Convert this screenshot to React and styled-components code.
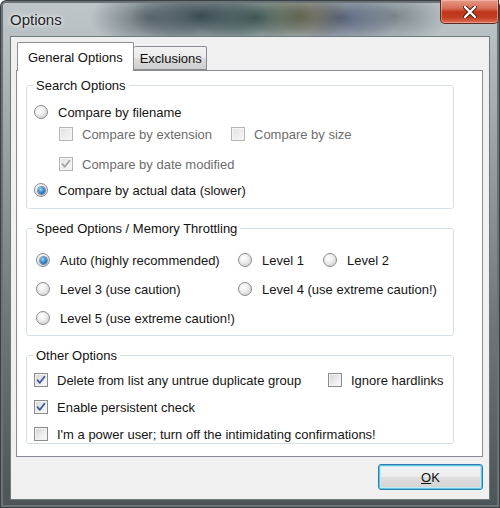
import styled, { createGlobalStyle } from "styled-components";

const GlobalStyle = createGlobalStyle`
  html, body { margin: 0; padding: 0; }
  body { font-family: "Liberation Sans", Arial, sans-serif; }
`;

const CheckMark = ({ disabled }) => (
  <svg width="10" height="10" viewBox="0 0 10 10">
    <path
      d="M1.5 5.2 L3.8 7.8 L8.5 1.8"
      fill="none"
      stroke={disabled ? "#a3a3a3" : "#3d5a9e"}
      strokeWidth="1.8"
      strokeLinecap="round"
      strokeLinejoin="round"
    />
  </svg>
);

const Radio = ({ checked }) => <RadioBox $checked={checked} />;

const Check = ({ checked, disabled }) => (
  <CheckBox $disabled={disabled}>{checked && <CheckMark disabled={disabled} />}</CheckBox>
);

const Option = ({ kind, checked, disabled, label, w }) => (
  <Cell $w={w}>
    {kind === "radio" ? <Radio checked={checked} /> : <Check checked={checked} disabled={disabled} />}
    <Label $disabled={disabled} $gap={kind === "radio" ? 10 : 9}>{label}</Label>
  </Cell>
);

export default function App() {
  return (
    <>
      <GlobalStyle />
      <Frame>
        <TitleBar>
          <Title>Options</Title>
          <CloseButton>
            <svg width="14" height="12" viewBox="0 0 14 12">
              <path d="M2 1 L12 11 M12 1 L2 11" stroke="#4a1b12" strokeWidth="4.2" strokeLinecap="round" />
              <path d="M2 1 L12 11 M12 1 L2 11" stroke="#ffffff" strokeWidth="2.4" strokeLinecap="round" />
            </svg>
          </CloseButton>
        </TitleBar>
        <Client>
          <TabStrip>
            <Tab $active>General Options</Tab>
            <Tab>Exclusions</Tab>
          </TabStrip>
          <Panel>
            <Group>
              <Legend>Search Options</Legend>
              <Row $indent={7}>
                <Option kind="radio" label="Compare by filename" />
              </Row>
              <Row $indent={32} $top={4}>
                <Option kind="check" disabled label="Compare by extension" w={172} />
                <Option kind="check" disabled label="Compare by size" />
              </Row>
              <Row $indent={32} $top={12}>
                <Option kind="check" disabled checked label="Compare by date modified" />
              </Row>
              <Row $indent={7} $top={8}>
                <Option kind="radio" checked label="Compare by actual data (slower)" />
              </Row>
            </Group>

            <Group $padTop={15} $padBottom={8}>
              <Legend>Speed Options / Memory Throttling</Legend>
              <Row $indent={9}>
                <Option kind="radio" checked label="Auto (highly recommended)" w={202} />
                <Option kind="radio" label="Level 1" w={85} />
                <Option kind="radio" label="Level 2" />
              </Row>
              <Row $indent={9} $top={11}>
                <Option kind="radio" label="Level 3 (use caution)" w={202} />
                <Option kind="radio" label="Level 4 (use extreme caution!)" />
              </Row>
              <Row $indent={9} $top={11}>
                <Option kind="radio" label="Level 5 (use extreme caution!)" />
              </Row>
            </Group>

            <Group $padTop={8} $padBottom={0}>
              <Legend>Other Options</Legend>
              <Row $indent={7}>
                <Option kind="check" checked label="Delete from list any untrue duplicate group" w={294} />
                <Option kind="check" label="Ignore hardlinks" />
              </Row>
              <Row $indent={7} $top={9}>
                <Option kind="check" checked label="Enable persistent check" />
              </Row>
              <Row $indent={7} $top={9}>
                <Option kind="check" label="I'm a power user; turn off the intimidating confirmations!" />
              </Row>
            </Group>
          </Panel>
          <ButtonBar>
            <OkButton>
              <u>O</u>K
            </OkButton>
          </ButtonBar>
        </Client>
      </Frame>
    </>
  );
}

/* ---- window frame ---- */

const Frame = styled.div`
  width: 500px;
  height: 508px;
  box-sizing: border-box;
  padding: 0 10px 8px 10px;
  display: flex;
  flex-direction: column;
  background:
    radial-gradient(ellipse 60px 30px at 150px 18px, rgba(60, 75, 82, 0.7), transparent),
    radial-gradient(ellipse 70px 32px at 200px 16px, rgba(34, 52, 60, 0.85), transparent),
    radial-gradient(ellipse 60px 30px at 255px 18px, rgba(40, 70, 62, 0.8), transparent),
    radial-gradient(ellipse 50px 28px at 300px 16px, rgba(95, 85, 45, 0.7), transparent),
    radial-gradient(ellipse 60px 30px at 340px 18px, rgba(52, 66, 100, 0.75), transparent),
    radial-gradient(ellipse 55px 28px at 395px 16px, rgba(90, 105, 112, 0.65), transparent),
    linear-gradient(180deg, #bfc6c9 0px, #b8c0c3 36px, #9ba3a6 140px, #6f777a 320px, #4d5457 508px);
  box-shadow: inset 0 0 0 1px #3a4144, inset 0 0 0 3px #6b7376;
  border-radius: 6px 6px 0 0;
`;

const TitleBar = styled.div`
  height: 37px;
  display: flex;
  align-items: flex-start;
  justify-content: space-between;
`;

const Title = styled.div`
  margin-top: 11px;
  font-size: 15px;
  color: #1d2326;
  text-shadow: 0 0 6px rgba(255, 255, 255, 0.9), 0 0 3px rgba(255, 255, 255, 0.8);
`;

const CloseButton = styled.div`
  width: 59px;
  height: 24px;
  margin-right: -9px;
  box-sizing: border-box;
  border: 1px solid #5b2a22;
  border-top: none;
  border-radius: 0 0 5px 5px;
  display: flex;
  align-items: center;
  justify-content: center;
  background: linear-gradient(180deg, #e59a89 0%, #d9705a 35%, #bf3519 52%, #c33c22 75%, #dc6e50 100%);
  box-shadow: inset 0 0 0 1px rgba(255, 200, 190, 0.5);
`;

const Client = styled.div`
  flex: 1;
  display: flex;
  flex-direction: column;
  box-sizing: border-box;
  padding: 5px 6px 9px 5px;
  background: #f0f0f0;
  border: 1px solid #6f7a7f;
  font-size: 13px;
  color: #1a1a1a;
`;

/* ---- tabs ---- */

const TabStrip = styled.div`
  display: flex;
  align-items: flex-end;
  height: 28px;
  padding-left: 1px;
`;

const Tab = styled.div`
  box-sizing: border-box;
  height: ${(p) => (p.$active ? "29px" : "24px")};
  margin-bottom: ${(p) => (p.$active ? "-1px" : "0")};
  padding: 0 ${(p) => (p.$active ? "10px" : "4px")} 0 ${(p) => (p.$active ? "10px" : "6px")};
  display: flex;
  align-items: center;
  border: 1px solid #898c95;
  border-bottom: ${(p) => (p.$active ? "none" : "1px solid #898c95")};
  border-left: ${(p) => (p.$active ? "1px solid #898c95" : "none")};
  background: ${(p) => (p.$active ? "#ffffff" : "linear-gradient(180deg, #f2f2f2 0%, #ebebeb 50%, #dddddd 51%, #cfcfcf 100%)")};
  border-radius: 2px 2px 0 0;
  position: relative;
  z-index: ${(p) => (p.$active ? 1 : 0)};
  font-size: 13px;
  color: #111;
`;

const Panel = styled.div`
  flex: 1;
  box-sizing: border-box;
  padding: 7px 0 0 9px;
  background: #ffffff;
  border: 1px solid #898c95;
  display: flex;
  flex-direction: column;
`;

/* ---- group boxes ---- */

const Group = styled.fieldset`
  width: 428px;
  box-sizing: border-box;
  margin: 0 0 12px 0;
  padding: ${(p) => p.$padTop ?? 10}px 0 ${(p) => p.$padBottom ?? 9}px 0;
  border: 1px solid #d5dfe5;
  border-radius: 3px;
  min-inline-size: 0;
`;

const Legend = styled.legend`
  margin-left: 6px;
  padding: 0 3px;
  line-height: 15px;
  font-size: 13px;
  color: #111;
`;

const Row = styled.div`
  display: flex;
  align-items: center;
  height: 18px;
  margin-top: ${(p) => p.$top ?? 0}px;
  padding-left: ${(p) => p.$indent ?? 0}px;
`;

const Cell = styled.div`
  display: flex;
  align-items: center;
  flex: none;
  width: ${(p) => (p.$w ? `${p.$w}px` : "auto")};
  white-space: nowrap;
`;

const Label = styled.span`
  margin-left: ${(p) => p.$gap}px;
  color: ${(p) => (p.$disabled ? "#6d6d6d" : "#151515")};
  font-size: 13px;
`;

const RadioBox = styled.span`
  width: 14px;
  height: 14px;
  flex: none;
  box-sizing: border-box;
  border-radius: 50%;
  border: 1px solid #8a8d90;
  background: radial-gradient(circle at 40% 35%, #ffffff 0%, #f1f1f1 35%, #d6d6d6 75%, #c7c7c7 100%);
  display: flex;
  align-items: center;
  justify-content: center;

  &::after {
    content: "";
    display: ${(p) => (p.$checked ? "block" : "none")};
    width: 7px;
    height: 7px;
    border-radius: 50%;
    background: radial-gradient(circle at 40% 35%, #9ee0fb 0%, #3a8ad0 45%, #114f8f 100%);
    box-shadow: 0 0 0 1px rgba(24, 70, 120, 0.55);
  }
`;

const CheckBox = styled.span`
  width: 14px;
  height: 14px;
  flex: none;
  box-sizing: border-box;
  border: 1px solid ${(p) => (p.$disabled ? "#b5b5b5" : "#8a8d90")};
  background: ${(p) =>
    p.$disabled
      ? "linear-gradient(135deg, #e2e2e2 0%, #f7f7f7 100%)"
      : "linear-gradient(135deg, #d3d3d3 0%, #eeeeee 60%, #fbfbfb 100%)"};
  box-shadow: inset 0 0 0 1px ${(p) => (p.$disabled ? "#f4f4f4" : "#f2f2f2")};
  display: flex;
  align-items: center;
  justify-content: center;
`;

/* ---- bottom buttons ---- */

const ButtonBar = styled.div`
  display: flex;
  justify-content: flex-end;
  margin-top: 7px;
`;

const OkButton = styled.div`
  width: 105px;
  height: 26px;
  box-sizing: border-box;
  border: 1px solid #2f7fa8;
  border-radius: 3px;
  display: flex;
  align-items: center;
  justify-content: center;
  background: linear-gradient(180deg, #f4f4f4 0%, #ececec 50%, #dedede 51%, #d2d2d2 100%);
  box-shadow: inset 0 0 0 1px #5fc4e6, inset 0 0 0 2px #bfeaf6;
  font-size: 13px;
  color: #111;
`;
